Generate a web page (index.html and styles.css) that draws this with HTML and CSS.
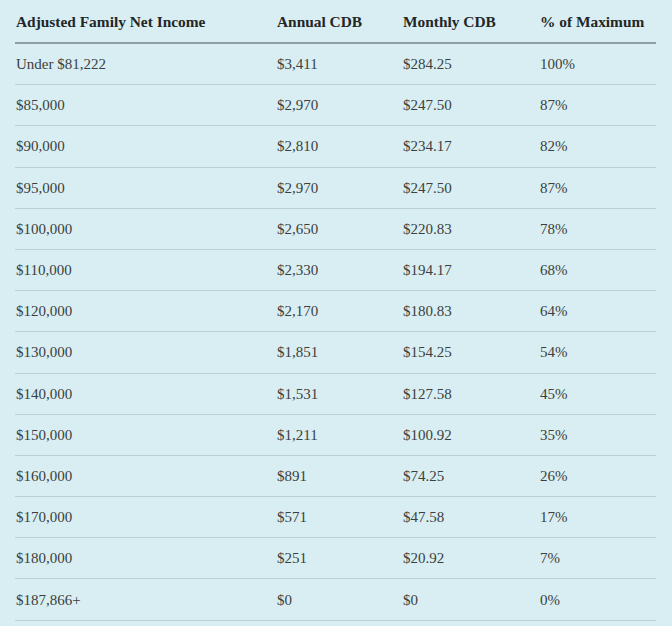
FILE: index.html
```html
<!DOCTYPE html>
<html lang="en">
<head>
<meta charset="utf-8">
<title>Canada Disability Benefit</title>
<link rel="stylesheet" href="styles.css">
</head>
<body>
<table class="cdb">
  <thead>
    <tr><th class="c1">Adjusted Family Net Income</th><th class="c2">Annual CDB</th><th class="c3">Monthly CDB</th><th class="c4">% of Maximum</th></tr>
  </thead>
  <tbody>
    <tr><td>Under $81,222</td><td>$3,411</td><td>$284.25</td><td>100%</td></tr>
    <tr><td>$85,000</td><td>$2,970</td><td>$247.50</td><td>87%</td></tr>
    <tr><td>$90,000</td><td>$2,810</td><td>$234.17</td><td>82%</td></tr>
    <tr><td>$95,000</td><td>$2,970</td><td>$247.50</td><td>87%</td></tr>
    <tr><td>$100,000</td><td>$2,650</td><td>$220.83</td><td>78%</td></tr>
    <tr><td>$110,000</td><td>$2,330</td><td>$194.17</td><td>68%</td></tr>
    <tr><td>$120,000</td><td>$2,170</td><td>$180.83</td><td>64%</td></tr>
    <tr><td>$130,000</td><td>$1,851</td><td>$154.25</td><td>54%</td></tr>
    <tr><td>$140,000</td><td>$1,531</td><td>$127.58</td><td>45%</td></tr>
    <tr><td>$150,000</td><td>$1,211</td><td>$100.92</td><td>35%</td></tr>
    <tr><td>$160,000</td><td>$891</td><td>$74.25</td><td>26%</td></tr>
    <tr><td>$170,000</td><td>$571</td><td>$47.58</td><td>17%</td></tr>
    <tr><td>$180,000</td><td>$251</td><td>$20.92</td><td>7%</td></tr>
    <tr><td>$187,866+</td><td>$0</td><td>$0</td><td>0%</td></tr>
  </tbody>
</table>
</body>
</html>
```
FILE: styles.css
```css
html, body {
  margin: 0;
  padding: 0;
  background: #d9eef2;
}
body {
  font-family: "Liberation Serif", "Times New Roman", serif;
  color: #3b3f40;
}
.cdb {
  border-collapse: collapse;
  margin-left: 15px;
  width: 637px;
  table-layout: fixed;
}
.cdb th, .cdb td {
  text-align: left;
  padding: 0 0 0 1px;
  white-space: nowrap;
}
.cdb th {
  font-weight: bold;
  font-size: 15.4px;
  color: #232627;
  height: 40px;
  padding-top: 2px;
  border-bottom: 2px solid #8e9ea2;
}
.cdb td {
  font-size: 15px;
  height: 39.2px;
  padding-top: 1px;
  border-bottom: 1px solid #bcd0d4;
}
.c1 { width: 260px; }
.c2 { width: 125px; }
.c3 { width: 136px; }
.c4 { width: 116px; }
```
